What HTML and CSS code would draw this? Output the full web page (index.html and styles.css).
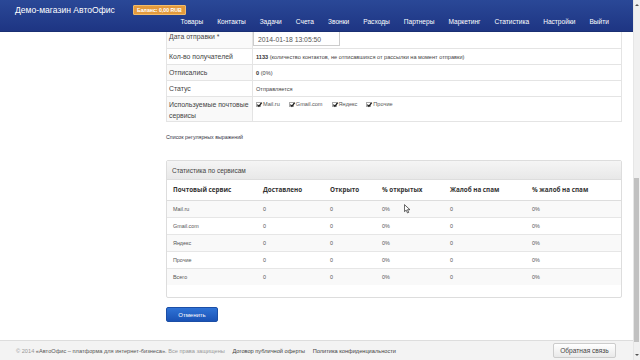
FILE: index.html
```html
<!DOCTYPE html>
<html lang="ru">
<head>
<meta charset="utf-8">
<title>Демо-магазин АвтоОфис</title>
<link rel="stylesheet" href="styles.css">
</head>
<body>
<div class="shell">
  <div class="page">
    <header class="navbar">
      <div class="brand-row">
        <span class="brand">Демо-магазин АвтоОфис</span>
        <span class="balance">Баланс: 0,00 RUB</span>
      </div>
      <nav class="menu">
        <a>Товары</a><a>Контакты</a><a>Задачи</a><a>Счета</a><a>Звонки</a><a>Расходы</a><a>Партнеры</a><a>Маркетинг</a><a>Статистика</a><a>Настройки</a><a>Выйти</a>
      </nav>
    </header>

    <main class="content">
      <table class="info">
        <tr class="row-date">
          <th>Дата отправки *</th>
          <td><div class="input">2014-01-18 13:05:50</div></td>
        </tr>
        <tr>
          <th>Кол-во получателей</th>
          <td><b>1133</b> (количество контактов, не отписавшихся от рассылки на момент отправки)</td>
        </tr>
        <tr>
          <th>Отписались</th>
          <td><b>0</b> (0%)</td>
        </tr>
        <tr>
          <th>Статус</th>
          <td>Отправляется</td>
        </tr>
        <tr class="row-services">
          <th>Используемые почтовые сервисы</th>
          <td>
            <div class="checks">
              <span class="chk"><i class="box"><svg viewBox="0 0 8 8"><path d="M1.5 4.2 L3.3 6 L6.6 1.8" fill="none" stroke="#222" stroke-width="1.4"/></svg></i>Mail.ru</span>
              <span class="chk"><i class="box"><svg viewBox="0 0 8 8"><path d="M1.5 4.2 L3.3 6 L6.6 1.8" fill="none" stroke="#222" stroke-width="1.4"/></svg></i>Gmail.com</span>
              <span class="chk"><i class="box"><svg viewBox="0 0 8 8"><path d="M1.5 4.2 L3.3 6 L6.6 1.8" fill="none" stroke="#222" stroke-width="1.4"/></svg></i>Яндекс</span>
              <span class="chk"><i class="box"><svg viewBox="0 0 8 8"><path d="M1.5 4.2 L3.3 6 L6.6 1.8" fill="none" stroke="#222" stroke-width="1.4"/></svg></i>Прочие</span>
            </div>
          </td>
        </tr>
      </table>

      <a class="regex">Список регулярных выражений</a>

      <section class="panel">
        <div class="panel-head">Статистика по сервисам</div>
        <table class="stats">
          <thead>
            <tr><th>Почтовый сервис</th><th>Доставлено</th><th>Открыто</th><th>% открытых</th><th>Жалоб на спам</th><th>% жалоб на спам</th></tr>
          </thead>
          <tbody>
            <tr><td>Mail.ru</td><td>0</td><td>0</td><td>0%</td><td>0</td><td>0%</td></tr>
            <tr><td>Gmail.com</td><td>0</td><td>0</td><td>0%</td><td>0</td><td>0%</td></tr>
            <tr><td>Яндекс</td><td>0</td><td>0</td><td>0%</td><td>0</td><td>0%</td></tr>
            <tr><td>Прочие</td><td>0</td><td>0</td><td>0%</td><td>0</td><td>0%</td></tr>
            <tr><td>Всего</td><td>0</td><td>0</td><td>0%</td><td>0</td><td>0%</td></tr>
          </tbody>
        </table>
        <svg class="cursor" viewBox="0 0 8 11"><path d="M0.5 0.5 L0.5 8.5 L2.5 6.8 L4 10 L5.4 9.4 L4 6.3 L6.8 6.3 Z" fill="#fff" stroke="#222" stroke-width="0.8"/></svg>
      </section>

      <button class="btn-cancel">Отменить</button>
    </main>

    <footer class="footer">
      <div class="copy">© 2014 <span class="brandname">«АвтоОфис – платформа для интернет-бизнеса».</span> Все права защищены <a>Договор публичной оферты</a> <a>Политика конфиденциальности</a></div>
      <button class="feedback">Обратная связь</button>
    </footer>
  </div>
  <div class="scrollbar">
    <div class="arrow up"></div>
    <div class="track"><div class="thumb"></div></div>
    <div class="arrow down"></div>
  </div>
</div>
</body>
</html>
```
FILE: styles.css
```css
* { box-sizing: border-box; }
html, body { margin: 0; padding: 0; }
body {
  width: 640px;
  height: 360px;
  overflow: hidden;
  font-family: "Liberation Sans", Arial, sans-serif;
  color: #333;
  background: #fff;
}
.shell { display: flex; width: 640px; height: 360px; }
.page {
  position: relative;
  flex: 1;
  height: 360px;
  display: flex;
  flex-direction: column;
  overflow: hidden;
}
.navbar {
  position: absolute;
  top: 0; left: 0; right: 0;
  height: 32px;
  z-index: 5;
  background: linear-gradient(#2a4897, #1e3583);
  border-bottom: 1px solid #1a2f73;
  padding: 5px 0 0 15px;
  color: #fff;
}
.brand-row { display: flex; align-items: center; height: 10px; }
.brand { font-size: 8.6px; width: 118px; }
.balance {
  background: #e39a3d;
  border: 1px solid #f1bb6a;
  border-radius: 1px;
  color: #fff;
  font-size: 5.2px;
  font-weight: bold;
  padding: 1px 3px;
  line-height: 6px;
}
.menu {
  display: flex;
  justify-content: flex-end;
  margin-top: 3px;
  padding-right: 24px;
  font-size: 6.6px;
}
.menu a { padding: 0 7px; }
.menu a:last-child { padding-right: 0; }

.content {
  padding: 21px 0 0 166px;
  width: 622px;
  flex: 1;
}
.info {
  width: 456px;
  border-collapse: collapse;
  border: 1px solid #e4e4e4;
  font-size: 5.6px;
}
.info th, .info td {
  border-top: 1px solid #e4e4e4;
  text-align: left;
  vertical-align: top;
  padding: 4px 3px 3px;
  line-height: 8px;
}
.info th {
  width: 86px;
  font-weight: normal;
  font-size: 6.9px;
  color: #444;
  border-right: 1px solid #e4e4e4;
  padding-left: 2px;
}
.info td { color: #444; padding-left: 3px; }
.info b { color: #333; }
.info tr:nth-child(odd) { background: #f9f9f9; }
.info tr:nth-child(odd) td { background: #fff; }
.info .row-date th { padding-top: 11px; }
.info .row-date td { padding: 5px 3px 2px; }
.info .row-date td, .info .row-date th { background: #fafafa; }
.info .row-services td { background: #f9f9f9; padding-top: 4px; }
.info .row-services th { padding: 2px 3px 0 2px; line-height: 11px; }
.input {
  width: 87px;
  height: 19px;
  border: 1px solid #ccc;
  background: #fff;
  font-size: 6.8px;
  line-height: 8px;
  color: #555;
  padding: 8px 0 0 4px;
  margin-left: -3px;
}
.checks { display: flex; gap: 9px; font-size: 5.6px; color: #555; line-height: 7px; }
.chk { display: flex; align-items: center; gap: 2px; }
.box {
  display: inline-block;
  width: 5px; height: 5px;
  border: 1px solid #aaa;
  background: #fff;
  position: relative;
}
.box svg { position: absolute; left: -1px; top: -2px; width: 7px; height: 7px; }

.regex {
  display: block;
  margin: 12px 0 0 0;
  font-size: 5.3px;
  color: #334;
  height: 7px;
}
.panel {
  position: relative;
  margin-top: 19px;
  width: 456px;
  height: 138px;
  border: 1px solid #ddd;
  border-radius: 2px;
  background: #fff;
}
.panel-head {
  height: 19px;
  background: linear-gradient(#f5f5f5, #e8e8e8);
  border-bottom: 1px solid #ddd;
  font-size: 6.5px;
  color: #444;
  padding: 6px 0 0 5px;
}
.stats { width: 100%; border-collapse: collapse; font-size: 5.4px; color: #555; }
.stats th {
  text-align: left;
  font-weight: bold;
  font-family: "Open Sans", "Liberation Sans", sans-serif;
  font-size: 6.3px;
  color: #333;
  height: 20px;
  padding: 0 0 0 6px;
  border-bottom: 1px solid #ddd;
}
.stats td { height: 17px; padding: 0 0 0 6px; border-top: 1px solid #e6e6e6; }
.stats tbody tr:nth-child(odd) { background: #f9f9f9; }
.stats th:nth-child(1) { width: 90px; }
.stats th:nth-child(2) { width: 67px; }
.stats th:nth-child(3) { width: 52px; }
.stats th:nth-child(4) { width: 68px; }
.stats th:nth-child(5) { width: 82px; }
.cursor { position: absolute; left: 237px; top: 43px; width: 7px; height: 10px; }

.btn-cancel {
  display: block;
  margin-top: 9px;
  width: 52px;
  height: 15px;
  border: 1px solid #1b4ea6;
  border-radius: 2px;
  background: linear-gradient(#2f73d6, #1a52b5);
  color: #fff;
  font-family: "Liberation Sans", Arial, sans-serif;
  font-size: 6px;
  padding: 0;
}

.footer {
  height: 20px;
  background: #f3f3f3;
  border-top: 1px solid #ddd;
  display: flex;
  align-items: center;
  justify-content: space-between;
  padding: 0 17px 0 16px;
  flex: none;
}
.copy { font-size: 5.65px; color: #999; }
.copy .brandname { color: #555; }
.copy a { color: #444; margin-left: 6px; }
.feedback {
  width: 63px;
  height: 15px;
  border: 1px solid #ccc;
  border-radius: 2px;
  background: linear-gradient(#fff, #e9e9e9);
  color: #444;
  font-family: "Liberation Sans", Arial, sans-serif;
  font-size: 6.6px;
  padding: 0;
}

.scrollbar {
  width: 7px;
  height: 360px;
  background: #f0f0f0;
  display: flex;
  flex-direction: column;
  border-left: 1px solid #e6e6e6;
}
.arrow { height: 10px; position: relative; }
.arrow::after {
  content: "";
  position: absolute;
  left: 1px; top: 4px;
  border-left: 2px solid transparent;
  border-right: 2px solid transparent;
}
.arrow.up::after { border-bottom: 2px solid #555; }
.arrow.down::after { border-top: 2px solid #555; }
.track { flex: 1; padding-top: 168px; padding-bottom: 8px; display: flex; flex-direction: column; }
.thumb { flex: 1; background: #c1c1c1; margin: 0 1px 0 0; }
```
